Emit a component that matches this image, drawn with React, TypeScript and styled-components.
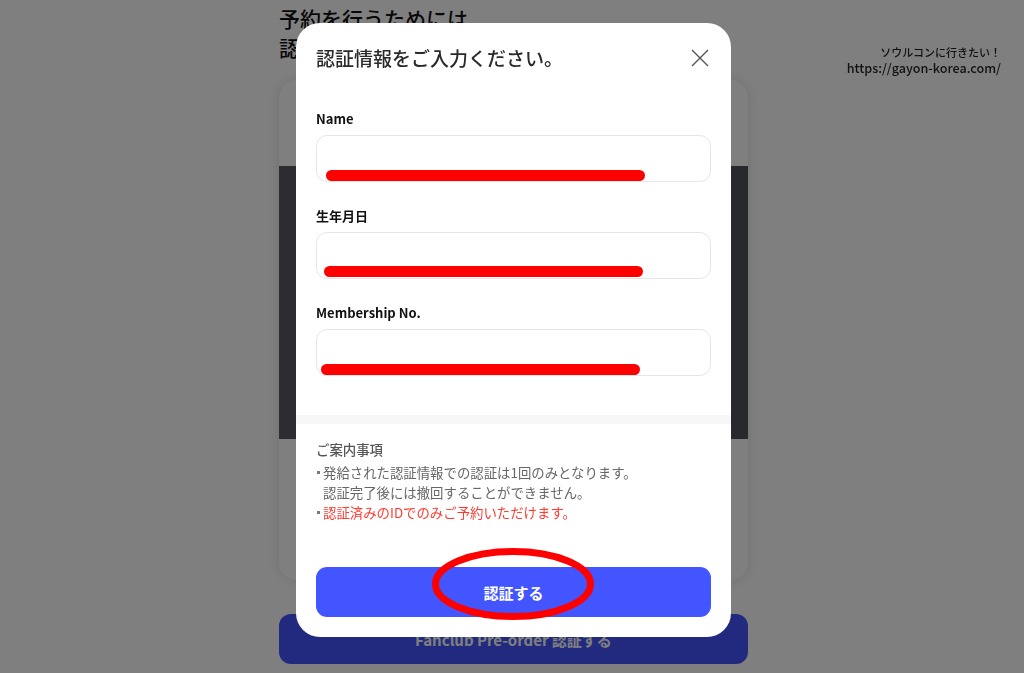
import React from "react";
import styled, { createGlobalStyle } from "styled-components";

const Global = createGlobalStyle`
  html, body { margin: 0; padding: 0; background: #ffffff; }
  body { font-family: "Noto Sans CJK JP", "Noto Sans", sans-serif; overflow: hidden; }
  * { box-sizing: border-box; }
`;

const Page = styled.div`
  width: 1024px;
  height: 673px;
  display: flex;
  justify-content: center;
  padding-left: 3px;
`;

const Column = styled.div`
  width: 469px;
  display: flex;
  flex-direction: column;
  padding-top: 4px;
`;

const Heading = styled.h1`
  margin: 0;
  font-size: 21px;
  line-height: 29px;
  font-weight: 500;
  color: #111;
`;

const BgCard = styled.div`
  margin-top: 18px;
  height: 500px;
  border-radius: 18px;
  box-shadow: 0 0 14px rgba(0, 0, 0, 0.12);
  display: flex;
  flex-direction: column;
  padding-top: 86px;
`;

const BgImage = styled.div`
  height: 273px;
  background: linear-gradient(90deg, #5a5b62, #50525a);
`;

const BgButton = styled.div`
  margin-top: 34px;
  height: 50px;
  border-radius: 12px;
  background: #4355ff;
  color: #ffffff;
  display: flex;
  align-items: center;
  justify-content: center;
  font-size: 15px;
  font-weight: 700;
`;

const Overlay = styled.div`
  position: fixed;
  inset: 0;
  background: rgba(0, 0, 0, 0.5);
  display: flex;
  justify-content: center;
  align-items: flex-start;
  padding-top: 23px;
  padding-left: 3px;
`;

const Watermark = styled.div`
  position: absolute;
  top: 44px;
  right: 23px;
  display: flex;
  flex-direction: column;
  align-items: flex-end;
  color: #111;
  font-family: "Noto Sans CJK JP", "Noto Sans", sans-serif;
  font-weight: 500;
`;

const MarkLine = styled.span<{ $size: number }>`
  font-size: ${(p) => p.$size}px;
  line-height: 16px;
`;

const Modal = styled.div`
  width: 435px;
  height: 614px;
  background: #ffffff;
  border-radius: 24px;
  display: flex;
  flex-direction: column;
  overflow: hidden;
`;

const Header = styled.div`
  display: flex;
  justify-content: space-between;
  align-items: flex-start;
  padding: 21px 20px 0 20px;
  height: 71px;
`;

const Title = styled.h2`
  margin: 0;
  font-size: 19px;
  line-height: 28px;
  font-weight: 500;
  color: #2a2a2a;
`;

const Close = styled.button`
  border: none;
  background: none;
  padding: 0;
  margin-top: 4px;
  margin-right: 1px;
  width: 20px;
  height: 20px;
  cursor: pointer;
  display: flex;
`;

const Form = styled.div`
  display: flex;
  flex-direction: column;
  padding: 16px 20px 0 20px;
  gap: 25px;
`;

const Field = styled.div`
  display: flex;
  flex-direction: column;
  gap: 7px;
`;

const Label = styled.label`
  font-size: 13px;
  line-height: 18px;
  font-weight: 700;
  color: #111;
  font-family: "Noto Sans CJK JP", "Noto Sans", sans-serif;
`;

const InputBox = styled.div`
  position: relative;
  height: 47px;
  border: 1px solid #e6e6e6;
  border-radius: 11px;
  background: #fff;
`;

const Redact = styled.div<{ $left: number; $top: number }>`
  position: absolute;
  left: ${(p) => p.$left}px;
  top: ${(p) => p.$top}px;
  width: 319px;
  height: 11px;
  border-radius: 6px;
  background: #ff0000;
`;

const Divider = styled.div`
  margin-top: 39px;
  height: 9px;
  background: #f7f7f7;
`;

const Notice = styled.div`
  padding: 15px 20px 0 20px;
  display: flex;
  flex-direction: column;
`;

const NoticeTitle = styled.div`
  font-size: 13.4px;
  line-height: 20px;
  font-weight: 500;
  color: #555;
  margin-bottom: 3px;
`;

const NoticeLine = styled.div<{ $red?: boolean; $indent?: boolean }>`
  font-size: 13.4px;
  line-height: 20px;
  color: ${(p) => (p.$red ? "#ff3b30" : "#666")};
  padding-left: ${(p) => (p.$indent ? "7px" : "0")};
  display: flex;
  align-items: center;
`;

const Dot = styled.span`
  width: 7px;
  flex: none;
  display: flex;
  align-items: center;
  &::before {
    content: "";
    width: 3px;
    height: 3px;
    margin-left: 1px;
    background: #777;
  }
`;

const Footer = styled.div`
  margin-top: auto;
  padding: 0 20px 20px 20px;
`;

const Submit = styled.button`
  position: relative;
  width: 100%;
  height: 50px;
  border: none;
  border-radius: 11px;
  background: #4355ff;
  color: #fff;
  font-family: "Noto Sans CJK JP", sans-serif;
  font-size: 15px;
  font-weight: 700;
  cursor: pointer;
`;

const Ring = styled.svg`
  position: absolute;
  left: 116px;
  top: -19px;
  overflow: visible;
  pointer-events: none;
`;

export default function App() {
  return (
    <>
      <Global />
      <Page>
        <Column>
          <Heading>
            予約を行うためには
            <br />
            認証情報の入力が必要です
          </Heading>
          <BgCard>
            <BgImage />
          </BgCard>
          <BgButton>Fanclub Pre-order 認証する</BgButton>
        </Column>
      </Page>
      <Overlay>
        <Watermark>
          <MarkLine $size={11}>ソウルコンに行きたい！</MarkLine>
          <MarkLine $size={12.6}>https://gayon-korea.com/</MarkLine>
        </Watermark>
        <Modal>
          <Header>
            <Title>認証情報をご入力ください。</Title>
            <Close aria-label="close">
              <svg width="20" height="20" viewBox="0 0 20 20">
                <path d="M2 2 L18 18 M18 2 L2 18" stroke="#555" strokeWidth="1.4" fill="none" />
              </svg>
            </Close>
          </Header>
          <Form>
            <Field>
              <Label>Name</Label>
              <InputBox>
                <Redact $left={9} $top={34} />
              </InputBox>
            </Field>
            <Field>
              <Label>生年月日</Label>
              <InputBox>
                <Redact $left={7} $top={33} />
              </InputBox>
            </Field>
            <Field>
              <Label>Membership No.</Label>
              <InputBox>
                <Redact $left={4} $top={34} />
              </InputBox>
            </Field>
          </Form>
          <Divider />
          <Notice>
            <NoticeTitle>ご案内事項</NoticeTitle>
            <NoticeLine>
              <Dot />
              発給された認証情報での認証は1回のみとなります。
            </NoticeLine>
            <NoticeLine $indent>認証完了後には撤回することができません。</NoticeLine>
            <NoticeLine $red>
              <Dot />
              認証済みのIDでのみご予約いただけます。
            </NoticeLine>
          </Notice>
          <Footer>
            <Submit>
              認証する
              <Ring width="162" height="72" viewBox="0 0 162 72">
                <ellipse cx="81" cy="36" rx="77.5" ry="32.5" fill="none" stroke="#ff0000" strokeWidth="7" />
              </Ring>
            </Submit>
          </Footer>
        </Modal>
      </Overlay>
    </>
  );
}
